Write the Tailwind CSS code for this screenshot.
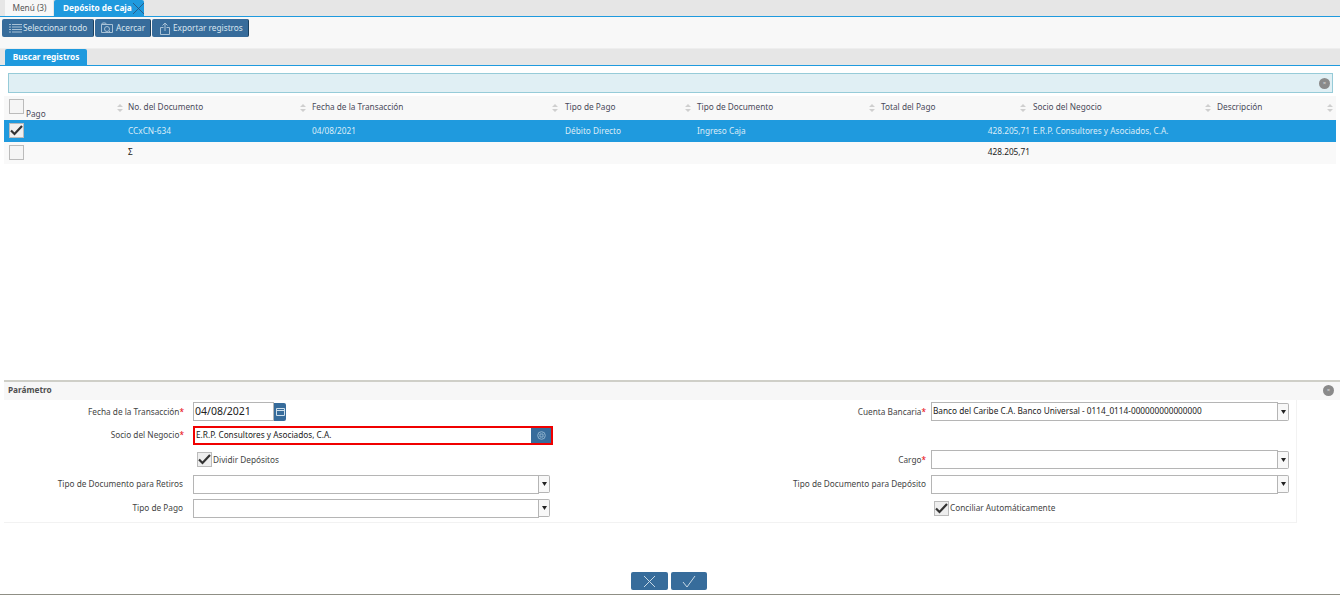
<!DOCTYPE html>
<html lang="es">
<head>
<meta charset="UTF-8">
<title>Depósito de Caja</title>
<script src="https://cdn.jsdelivr.net/npm/@tailwindcss/browser@4"></script>
</head>
<body class="bg-white">
<div class="w-[1340px] h-[595px] overflow-hidden flex flex-col font-['Noto_Sans','Open_Sans',sans-serif] text-[8.25px] text-[#333]">

  <!-- main tabs -->
  <div class="h-[17px] shrink-0 bg-[#e6e6e6] border-b border-[#1f9ade] flex items-end pl-[5px] gap-[1px]">
    <div class="h-[16px] w-[48px] bg-[#f7f7f7] flex items-center justify-center pl-[1px] text-[#555]">Menú (3)</div>
    <div class="h-[16px] w-[90px] bg-[#1f9ade] rounded-t-[2px] flex items-center pl-[9px] text-white font-bold relative">
      Depósito de Caja
      <svg class="absolute right-[0px] top-[3px]" width="11" height="11" viewBox="0 0 11 11" fill="none" stroke="#2d4f73" stroke-width="0.8"><path d="M0 0 L11 11 M11 0 L0 11"/></svg>
    </div>
  </div>

  <!-- toolbar -->
  <div class="h-[32px] shrink-0 bg-[#f8f8f8] pt-[2px] pl-[2px] flex items-start border-b border-[#eee]">
    <button class="h-[18px] w-[92px] bg-[#376c9b] rounded-[2px] border-r border-[#1b4160] text-[#d9e5ee] flex items-center pl-[7px] gap-[1px] whitespace-nowrap">
      <svg width="13" height="11" viewBox="0 0 13 11" fill="none" stroke="#a9c2d6" stroke-width="1"><path d="M0 1.500h2M3 1.500h10M0 4h2M3 4h10M0 6.500h2M3 6.500h10M0 9h2M3 9h10"/></svg>
      Seleccionar todo
    </button>
    <button class="h-[18px] w-[56px] ml-[1px] bg-[#376c9b] rounded-[2px] border-r border-[#1b4160] text-[#d9e5ee] flex items-center pl-[6px] gap-[3px] whitespace-nowrap">
      <svg width="12" height="12" viewBox="0 0 12 12" fill="none" stroke="#a9c2d6" stroke-width="1"><path d="M.5 2.500h11v8H.5zM.5 2.500l1-1.500h3l1 1.500"/><circle cx="6" cy="7" r="2.500"/><path d="M8 9l2 2"/></svg>
      Acercar
    </button>
    <button class="h-[18px] w-[97px] ml-[1px] bg-[#376c9b] rounded-[2px] border-r border-[#1b4160] text-[#d9e5ee] flex items-center pl-[8px] gap-[3px] whitespace-nowrap">
      <svg width="10" height="13" viewBox="0 0 10 13" fill="none" stroke="#a9c2d6" stroke-width="1"><path d="M.5 5.500h3M6.500 5.500h3v7h-9v-7M5 9V1M2.500 3.500L5 1l2.500 2.500"/></svg>
      Exportar registros
    </button>
  </div>

  <!-- search tab -->
  <div class="h-[17px] shrink-0 bg-[#e6e6e6] border-b border-[#1f9ade] flex items-end pl-[5px]">
    <div class="h-[16px] w-[82px] bg-[#1f9ade] rounded-t-[2px] flex items-center justify-center text-white font-bold">Buscar registros</div>
  </div>

  <!-- filter bar -->
  <div class="h-[20px] shrink-0 mt-[7px] mx-[8px] w-[1325px] bg-[#e0eff4] border border-[#96cbd8] flex items-center justify-end pr-[2px]">
    <span class="w-[11px] h-[11px] rounded-full bg-[#8a8a8a] text-[#ddd] text-[6px] leading-[11px] text-center">×</span>
  </div>

  <!-- results grid -->
  <div class="mt-[3px] ml-[4px] w-[1332px] shrink-0">
    <div class="h-[24px] bg-[#f8f8f8] grid grid-cols-[120px_184px_253px_132px_184px_152px_184px_123px] text-[#4a4a5a]">
      <div class="relative flex items-end pl-[22px]">
        <span class="absolute left-[5px] top-[3px] w-[15px] h-[15px] bg-[#f5f5f5] border border-[#bbb]"></span>
        Pago
        <svg class="absolute right-[1px] top-[8px]" width="6" height="8" viewBox="0 0 6 8" fill="#cfcfcf"><path d="M3 0L6 3H0zM0 5h6L3 8z"/></svg>
      </div>
      <div class="relative flex items-center pl-[4px] pb-[2px]">No. del Documento
        <svg class="absolute right-[2px] top-[8px]" width="6" height="8" viewBox="0 0 6 8" fill="#cfcfcf"><path d="M3 0L6 3H0zM0 5h6L3 8z"/></svg>
      </div>
      <div class="relative flex items-center pl-[4px] pb-[2px]">Fecha de la Transacción
        <svg class="absolute right-[3px] top-[8px]" width="6" height="8" viewBox="0 0 6 8" fill="#cfcfcf"><path d="M3 0L6 3H0zM0 5h6L3 8z"/></svg>
      </div>
      <div class="relative flex items-center pl-[4px] pb-[2px]">Tipo de Pago
        <svg class="absolute right-[2px] top-[8px]" width="6" height="8" viewBox="0 0 6 8" fill="#cfcfcf"><path d="M3 0L6 3H0zM0 5h6L3 8z"/></svg>
      </div>
      <div class="relative flex items-center pl-[4px] pb-[2px]">Tipo de Documento
        <svg class="absolute right-[2px] top-[8px]" width="6" height="8" viewBox="0 0 6 8" fill="#cfcfcf"><path d="M3 0L6 3H0zM0 5h6L3 8z"/></svg>
      </div>
      <div class="relative flex items-center pl-[4px] pb-[2px]">Total del Pago
        <svg class="absolute right-[3px] top-[8px]" width="6" height="8" viewBox="0 0 6 8" fill="#cfcfcf"><path d="M3 0L6 3H0zM0 5h6L3 8z"/></svg>
      </div>
      <div class="relative flex items-center pl-[4px] pb-[2px]">Socio del Negocio
        <svg class="absolute right-[2px] top-[8px]" width="6" height="8" viewBox="0 0 6 8" fill="#cfcfcf"><path d="M3 0L6 3H0zM0 5h6L3 8z"/></svg>
      </div>
      <div class="relative flex items-center pl-[4px] pb-[2px]">Descripción
        <svg class="absolute right-[3px] top-[8px]" width="6" height="8" viewBox="0 0 6 8" fill="#cfcfcf"><path d="M3 0L6 3H0zM0 5h6L3 8z"/></svg>
      </div>
    </div>
    <div class="h-[22px] bg-[#1f9ade] text-[#dcecf7] grid grid-cols-[120px_184px_253px_132px_184px_152px_184px_123px] items-center">
      <div class="pl-[5px] pb-[1px]">
        <span class="w-[15px] h-[15px] bg-[#f0f0f0] border border-[#bbb] flex items-center justify-center">
          <svg width="13" height="11" viewBox="0 0 13 11" fill="none" stroke="#333" stroke-width="2.200"><path d="M1 5.500L4.500 9 12 1"/></svg>
        </span>
      </div>
      <div class="pl-[4px]">CCxCN-634</div>
      <div class="pl-[4px]">04/08/2021</div>
      <div class="pl-[4px]">Débito Directo</div>
      <div class="pl-[4px]">Ingreso Caja</div>
      <div class="text-right -mr-[1px]">428.205,71</div>
      <div class="pl-[4px] whitespace-nowrap">E.R.P. Consultores y Asociados, C.A.</div>
      <div></div>
    </div>
    <div class="h-[22px] bg-[#f9f9f9] text-[#222] grid grid-cols-[120px_184px_253px_132px_184px_152px_184px_123px] items-center">
      <div class="pl-[5px] pb-[1px]"><span class="block w-[15px] h-[15px] bg-[#f5f5f5] border border-[#bbb]"></span></div>
      <div class="pl-[4px] pb-[1px]">Σ</div>
      <div></div>
      <div></div>
      <div></div>
      <div class="text-right -mr-[1px] pb-[1px]">428.205,71</div>
      <div></div>
      <div></div>
    </div>
  </div>

  <div class="flex-1"></div>

  <!-- parameter panel -->
  <div class="shrink-0 h-[214px] ml-[4px] w-[1336px] flex flex-col">
    <div class="h-[2px] bg-[#cfcfc8]"></div>
    <div class="h-[18px] bg-[#f7f7f7] flex items-center justify-between pl-[4px] pr-[6px] font-bold text-[#4f4f4f] pb-[1px]">
      Parámetro
      <span class="w-[11px] h-[11px] rounded-full bg-[#8a8a8a] text-[#ddd] text-[6px] leading-[11px] text-center font-normal">×</span>
    </div>

    <div class="w-[1293px] h-[123px] border-b border-r border-[#f2f2f2] text-[#444] grid grid-cols-[631px_1fr]">
      <!-- left column -->
      <div class="flex flex-col">
        <div class="h-[23px] flex items-center">
          <label class="w-[180px] pt-[1px] text-right whitespace-nowrap">Fecha de la Transacción<span class="text-red-600">*</span></label>
          <span class="ml-[9px] h-[19px] w-[81px] border border-[#b5b5b5] text-[10.5px] text-[#222] pl-[1px] flex items-center">04/08/2021</span>
          <span class="h-[18px] w-[12px] bg-[#376c9b] rounded-r-[2px] flex items-center justify-center">
            <svg width="9" height="9" viewBox="0 0 9 9" fill="none" stroke="#cfe0ec" stroke-width="1"><path d="M.5 1.500h8v7h-8zM.5 3.500h8"/></svg>
          </span>
        </div>
        <div class="h-[24px] flex items-center">
          <label class="w-[180px] text-right whitespace-nowrap">Socio del Negocio<span class="text-red-600">*</span></label>
          <div class="ml-[9px] h-[19px] w-[360px] border-2 border-[#f00000] flex items-center justify-between box-border">
            <span class="pl-[1px] text-[#222]">E.R.P. Consultores y Asociados, C.A.</span>
            <span class="h-[15px] w-[20px] bg-[#376c9b] flex items-center justify-center">
              <svg width="9" height="9" viewBox="0 0 9 9" fill="none" stroke="#8fb2cc" stroke-width="1"><circle cx="4.500" cy="4.500" r="3.800"/><path d="M3 3h3v3H3z"/></svg>
            </span>
          </div>
        </div>
        <div class="h-[25px] flex items-center pl-[189px]">
          <span class="ml-[4px] w-[15px] h-[15px] bg-[#eee] border border-[#bbb] flex items-center justify-center">
            <svg width="13" height="11" viewBox="0 0 13 11" fill="none" stroke="#333" stroke-width="2.200"><path d="M1 5.500L4.500 9 12 1"/></svg>
          </span>
          <span class="ml-[1px] pt-[1px]">Dividir Depósitos</span>
        </div>
        <div class="h-[24px] flex items-center">
          <label class="w-[179px] pt-[1px] text-right whitespace-nowrap">Tipo de Documento para Retiros</label>
          <span class="ml-[10px] h-[19px] w-[346px] border border-[#b5b5b5]"></span>
          <span class="h-[18px] w-[11px] bg-[#f8f8f8] border border-l-0 border-[#b5b5b5] rounded-r-[2px] flex items-center justify-center">
            <svg width="5" height="4" viewBox="0 0 5 4" fill="#222"><path d="M0 0h5L2.500 4z"/></svg>
          </span>
        </div>
        <div class="h-[24px] flex items-center">
          <label class="w-[179px] pt-[1px] text-right whitespace-nowrap">Tipo de Pago</label>
          <span class="ml-[10px] h-[19px] w-[346px] border border-[#b5b5b5]"></span>
          <span class="h-[18px] w-[11px] bg-[#f8f8f8] border border-l-0 border-[#b5b5b5] rounded-r-[2px] flex items-center justify-center">
            <svg width="5" height="4" viewBox="0 0 5 4" fill="#222"><path d="M0 0h5L2.500 4z"/></svg>
          </span>
        </div>
      </div>
      <!-- right column -->
      <div class="flex flex-col">
        <div class="h-[23px] flex items-center">
          <label class="w-[291px] pt-[1px] text-right whitespace-nowrap">Cuenta Bancaria<span class="text-red-600">*</span></label>
          <span class="ml-[5px] h-[19px] w-[347px] border border-[#b5b5b5] text-[#222] pl-[1px] flex items-center whitespace-nowrap">Banco del Caribe C.A. Banco Universal - 0114_0114-000000000000000</span>
          <span class="h-[18px] w-[11px] bg-[#f8f8f8] border border-l-0 border-[#b5b5b5] rounded-r-[2px] flex items-center justify-center">
            <svg width="5" height="4" viewBox="0 0 5 4" fill="#222"><path d="M0 0h5L2.500 4z"/></svg>
          </span>
        </div>
        <div class="h-[24px]"></div>
        <div class="h-[25px] flex items-center">
          <label class="w-[291px] pt-[1px] text-right whitespace-nowrap">Cargo<span class="text-red-600">*</span></label>
          <span class="ml-[5px] h-[19px] w-[347px] border border-[#b5b5b5]"></span>
          <span class="h-[18px] w-[11px] bg-[#f8f8f8] border border-l-0 border-[#b5b5b5] rounded-r-[2px] flex items-center justify-center">
            <svg width="5" height="4" viewBox="0 0 5 4" fill="#222"><path d="M0 0h5L2.500 4z"/></svg>
          </span>
        </div>
        <div class="h-[24px] flex items-center">
          <label class="w-[291px] pt-[1px] text-right whitespace-nowrap">Tipo de Documento para Depósito</label>
          <span class="ml-[5px] h-[19px] w-[347px] border border-[#b5b5b5]"></span>
          <span class="h-[18px] w-[11px] bg-[#f8f8f8] border border-l-0 border-[#b5b5b5] rounded-r-[2px] flex items-center justify-center">
            <svg width="5" height="4" viewBox="0 0 5 4" fill="#222"><path d="M0 0h5L2.500 4z"/></svg>
          </span>
        </div>
        <div class="h-[24px] flex items-center pl-[299px]">
          <span class="w-[15px] h-[15px] bg-[#eee] border border-[#bbb] flex items-center justify-center">
            <svg width="13" height="11" viewBox="0 0 13 11" fill="none" stroke="#333" stroke-width="2.200"><path d="M1 5.500L4.500 9 12 1"/></svg>
          </span>
          <span class="ml-[1px] pt-[1px] whitespace-nowrap">Conciliar Automáticamente</span>
        </div>
      </div>
    </div>

    <!-- footer buttons -->
    <div class="flex-1 flex items-end justify-center pr-[6px] gap-[3px] pb-[4px]">
      <button class="h-[18px] w-[37px] bg-[#376c9b] rounded-[2px] flex items-center justify-center">
        <svg width="13" height="13" viewBox="0 0 13 13" fill="none" stroke="#c8d9e6" stroke-width="1"><path d="M1 1l11 11M12 1L1 12"/></svg>
      </button>
      <button class="h-[18px] w-[36px] bg-[#376c9b] rounded-[2px] flex items-center justify-center">
        <svg width="14" height="13" viewBox="0 0 14 13" fill="none" stroke="#c8d9e6" stroke-width="1"><path d="M1 7l4 5L13 1"/></svg>
      </button>
    </div>
  </div>

  <div class="h-[1px] shrink-0 bg-[#8f8f85]"></div>
</div>
</body>
</html>
